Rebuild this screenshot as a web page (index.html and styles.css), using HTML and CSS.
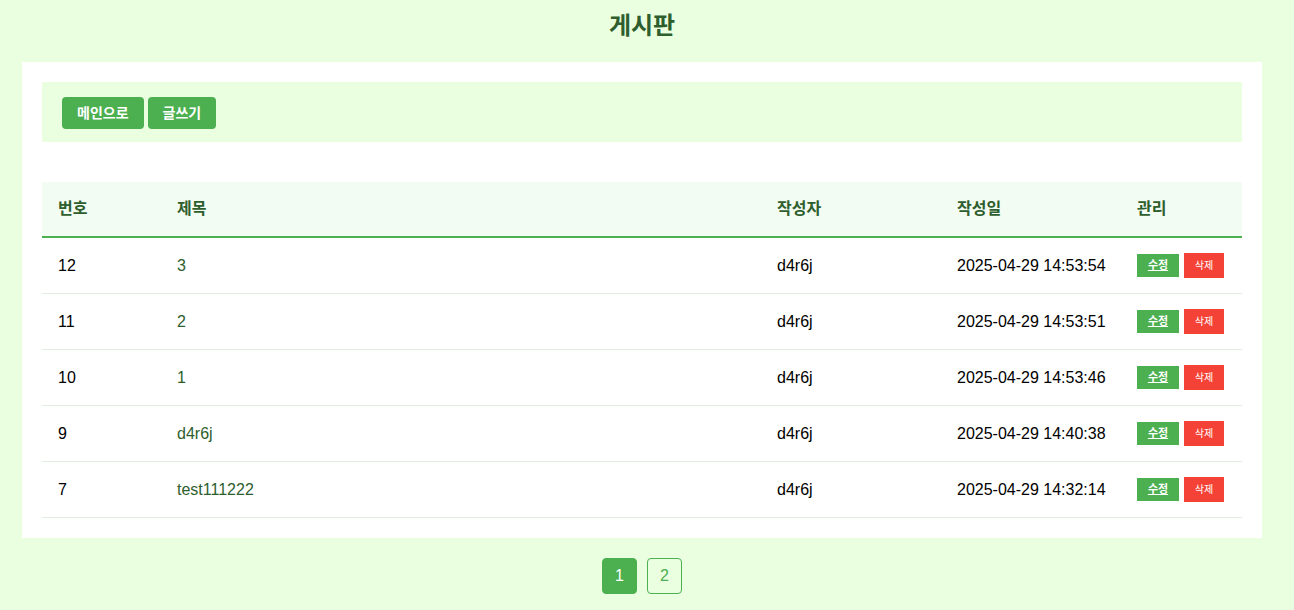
FILE: index.html
```html
<!DOCTYPE html>
<html lang="ko">
<head>
<meta charset="utf-8">
<title>게시판</title>
<link rel="stylesheet" href="styles.css">
</head>
<body>
<h1 class="page-title">게시판</h1>
<div class="board">
  <div class="toolbar">
    <a class="btn" href="#">메인으로</a>
    <a class="btn" href="#">글쓰기</a>
  </div>
  <table class="list">
    <colgroup>
      <col class="c-no"><col class="c-title"><col class="c-author"><col class="c-date"><col class="c-manage">
    </colgroup>
    <thead>
      <tr><th>번호</th><th>제목</th><th>작성자</th><th>작성일</th><th>관리</th></tr>
    </thead>
    <tbody>
      <tr><td>12</td><td><a class="title-link" href="#">3</a></td><td>d4r6j</td><td>2025-04-29 14:53:54</td><td><div class="manage"><a class="btn-edit" href="#">수정</a><button class="btn-del">삭제</button></div></td></tr>
      <tr><td>11</td><td><a class="title-link" href="#">2</a></td><td>d4r6j</td><td>2025-04-29 14:53:51</td><td><div class="manage"><a class="btn-edit" href="#">수정</a><button class="btn-del">삭제</button></div></td></tr>
      <tr><td>10</td><td><a class="title-link" href="#">1</a></td><td>d4r6j</td><td>2025-04-29 14:53:46</td><td><div class="manage"><a class="btn-edit" href="#">수정</a><button class="btn-del">삭제</button></div></td></tr>
      <tr><td>9</td><td><a class="title-link" href="#">d4r6j</a></td><td>d4r6j</td><td>2025-04-29 14:40:38</td><td><div class="manage"><a class="btn-edit" href="#">수정</a><button class="btn-del">삭제</button></div></td></tr>
      <tr><td>7</td><td><a class="title-link" href="#">test111222</a></td><td>d4r6j</td><td>2025-04-29 14:32:14</td><td><div class="manage"><a class="btn-edit" href="#">수정</a><button class="btn-del">삭제</button></div></td></tr>
    </tbody>
  </table>
</div>
<div class="pagination">
  <a class="page active" href="#">1</a>
  <a class="page" href="#">2</a>
</div>
</body>
</html>
```
FILE: styles.css
```css
html, body {
  margin: 0;
}
body {
  background: #eafee0;
  font-family: "Liberation Sans", Arial, "Noto Sans CJK KR", sans-serif;
  font-size: 16px;
  color: #000;
  padding: 10px 32px 0 22px;
}
.page-title {
  margin: 0 0 20px;
  text-align: center;
  font-size: 24px;
  line-height: 32px;
  color: #2e5e2e;
  font-weight: bold;
}
.board {
  background: #fff;
  padding: 20px;
}
.toolbar {
  background: #eafee0;
  padding: 15px 20px 13px;
  display: flex;
  align-items: flex-start;
  gap: 4px;
}
.btn {
  display: block;
  height: 32px;
  box-sizing: border-box;
  background: #4caf50;
  color: #fff;
  text-decoration: none;
  font-size: 14px;
  font-weight: bold;
  line-height: 16px;
  padding: 8px 15px;
  border-radius: 4px;
}
.list {
  width: 100%;
  border-collapse: collapse;
  margin-top: 40px;
  table-layout: fixed;
}
.c-no { width: 119px; }
.c-title { width: 600px; }
.c-author { width: 180px; }
.c-date { width: 180px; }
.c-manage { width: 121px; }
.list th {
  background: #f3fcf2;
  color: #2e5e2e;
  text-align: left;
  font-weight: bold;
  padding: 16px;
  height: 22px;
  line-height: 22px;
  border-bottom: 2px solid #4caf50;
}
.list td {
  padding: 16px;
  height: 23px;
  line-height: 23px;
  border-bottom: 1px solid #e2ede2;
  white-space: nowrap;
}
.title-link {
  color: #2e5e2e;
  text-decoration: none;
}
.manage {
  display: flex;
  align-items: center;
  gap: 5px;
  height: 23px;
}
.btn-edit {
  display: block;
  box-sizing: border-box;
  height: 23px;
  width: 42px;
  text-align: center;
  background: #4caf50;
  color: #fff;
  font-size: 11px;
  font-weight: bold;
  line-height: 13px;
  padding: 5px 0;
  text-decoration: underline;
}
.btn-del {
  display: block;
  flex: none;
  box-sizing: border-box;
  height: 25px;
  width: 40px;
  margin: 0;
  background: #f44336;
  color: #fff;
  border: none;
  font-family: "Liberation Sans", Arial, "Noto Sans CJK KR", sans-serif;
  font-size: 10px;
  line-height: 13px;
  padding: 0;
  cursor: pointer;
}
.pagination {
  display: flex;
  justify-content: center;
  gap: 10px;
  margin-top: 20px;
}
.page {
  display: inline-block;
  padding: 8px 12px;
  border: 1px solid #4caf50;
  border-radius: 4px;
  color: #4caf50;
  text-decoration: none;
  font-size: 16px;
  line-height: 18px;
}
.page.active {
  background: #4caf50;
  color: #fff;
}
```
